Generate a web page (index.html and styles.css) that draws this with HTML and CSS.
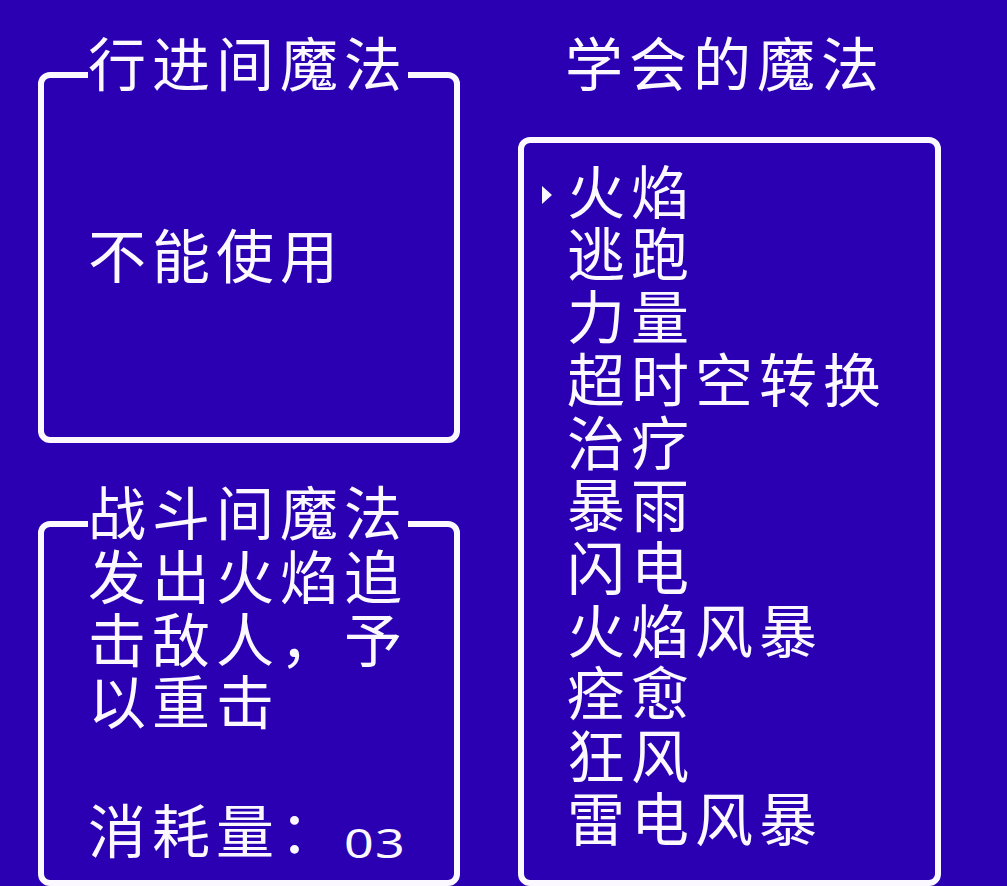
FILE: index.html
```html
<!DOCTYPE html>
<html lang="zh-CN">
<head>
<meta charset="utf-8">
<title>魔法</title>
<link rel="stylesheet" href="styles.css">
</head>
<body>
<div class="screen">
  <div class="col col-left">
    <section class="box box-field">
      <div class="box-title">行进间魔法</div>
      <div class="field-msg">不能使用</div>
    </section>
    <section class="box box-battle">
      <div class="box-title">战斗间魔法</div>
      <div class="desc">
        <div>发出火焰追</div>
        <div>击敌人，予</div>
        <div>以重击</div>
      </div>
      <div class="cost">消耗量：<span class="num">03</span></div>
    </section>
  </div>
  <div class="col col-right">
    <h1 class="col-title">学会的魔法</h1>
    <section class="box box-list">
      <ul class="spells">
        <li class="spell active"><span class="mark"></span>火焰</li>
        <li class="spell"><span class="mark"></span>逃跑</li>
        <li class="spell"><span class="mark"></span>力量</li>
        <li class="spell"><span class="mark"></span>超时空转换</li>
        <li class="spell"><span class="mark"></span>治疗</li>
        <li class="spell"><span class="mark"></span>暴雨</li>
        <li class="spell"><span class="mark"></span>闪电</li>
        <li class="spell"><span class="mark"></span>火焰风暴</li>
        <li class="spell"><span class="mark"></span>痊愈</li>
        <li class="spell"><span class="mark"></span>狂风</li>
        <li class="spell"><span class="mark"></span>雷电风暴</li>
      </ul>
    </section>
  </div>
</div>
</body>
</html>
```
FILE: styles.css
```css
html, body {
  margin: 0;
  padding: 0;
}
body {
  width: 1007px;
  height: 886px;
  overflow: hidden;
  background: #2b00b3;
  color: #fbf8ff;
  font-family: "Noto Sans CJK SC", "Noto Sans", sans-serif;
  font-size: 58px;
  line-height: 62.7px;
  letter-spacing: 6px;
  font-weight: 400;
}
.screen {
  display: grid;
  grid-template-columns: 422px 423px;
  column-gap: 58px;
  padding-left: 38px;
  height: 886px;
}
.col {
  display: flex;
  flex-direction: column;
}
.col-left {
  padding-top: 72px;
  gap: 78px;
}
.box {
  position: relative;
  box-sizing: border-box;
  border: 6px solid #fbf8ff;
  border-radius: 12px;
}
.box-title {
  position: absolute;
  left: 44px;
  top: -48px;
  background: #2b00b3;
  white-space: nowrap;
}
.box-field {
  height: 371px;
  padding: 144px 0 0 44px;
}
.box-battle {
  height: 365px;
  padding: 16px 0 0 44px;
}
.cost {
  margin-top: 66px;
  white-space: nowrap;
}
.num {
  display: inline-block;
  font-family: "Noto Sans", sans-serif;
  font-weight: 400;
  font-size: 40px;
  letter-spacing: 1px;
  transform: scaleX(1.3);
  transform-origin: left center;
  vertical-align: -5px;
}
.col-title {
  margin: 30px 0 0 0;
  padding-left: 47px;
  font-size: inherit;
  font-weight: inherit;
  line-height: inherit;
}
.box-list {
  margin-top: 44px;
  height: 749px;
  padding: 15px 0 0 18px;
}
.spells {
  list-style: none;
  margin: 0;
  padding: 0;
}
.spell {
  display: flex;
  align-items: center;
  white-space: nowrap;
}
.mark {
  flex: 0 0 25px;
  height: 18px;
  margin-top: 12px;
}
.active .mark::before {
  content: "";
  display: block;
  width: 0;
  height: 0;
  border-left: 10px solid #fbf8ff;
  border-top: 9px solid transparent;
  border-bottom: 9px solid transparent;
}
```
